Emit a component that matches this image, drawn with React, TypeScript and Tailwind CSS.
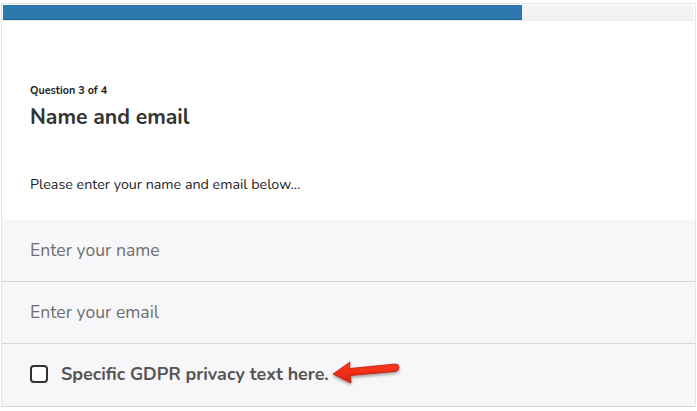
import React from "react";

function Arrow() {
  return (
    <svg width="72" height="28" viewBox="0 0 72 28" className="ml-[2px] -mt-[4px] overflow-visible">
      <defs>
        <filter id="sh" x="-20%" y="-40%" width="140%" height="200%">
          <feDropShadow dx="0" dy="2" stdDeviation="1.5" floodColor="#000" floodOpacity="0.35" />
        </filter>
        <linearGradient id="rg" x1="0" y1="0" x2="0" y2="1">
          <stop offset="0" stopColor="#ff3b22" />
          <stop offset="1" stopColor="#e0200c" />
        </linearGradient>
      </defs>
      <path
        d="M2 16 L19 4 L18.5 10.5 L64 6 Q68 5.8 68 9.5 Q68 13 64 13.5 L19.5 17.5 L20 25 Z"
        fill="url(#rg)"
        stroke="#b81a08"
        strokeWidth="0.8"
        strokeLinejoin="round"
        filter="url(#sh)"
      />
    </svg>
  );
}

export default function App() {
  return (
    <div className="w-[697px] h-[411px] bg-white overflow-hidden font-['Nunito','Lato','Open_Sans',sans-serif]">
      <div className="mx-[1px] mt-[3px] border-x border-t border-[#e6e6e6]">
        <div className="mx-[1px] mt-[1px] h-[16px] bg-[#f3f3f3] border-b border-[#ececec]">
          <div className="h-full w-[519px] bg-[#2c77ad] border-b border-[#23628f]" />
        </div>

        <div className="bg-white px-[28px] pt-[63px] pb-[25px]">
          <p className="text-[10.8px] font-bold text-[#222] leading-[14px]">Question 3 of 4</p>
          <h1 className="mt-[6px] text-[21.2px] font-bold text-[#333] leading-[26px]">Name and email</h1>
          <p className="mt-[45px] text-[14.3px] text-[#222] leading-[20px]">Please enter your name and email below...</p>
        </div>

        <div className="bg-[#f7f7f9]">
          <div className="h-[62px] flex items-center px-[28px] border-b border-[#d6d6d8]">
            <span className="text-[17.6px] text-[#6f6f6f]">Enter your name</span>
          </div>
          <div className="h-[62px] flex items-center px-[28px] border-b border-[#d6d6d8]">
            <span className="text-[17.6px] text-[#6f6f6f]">Enter your email</span>
          </div>
          <div className="h-[63px] flex items-center px-[28px] pb-[2px] border-b border-[#d6d6d8]">
            <span className="w-[18px] h-[18px] rounded-[4px] border-2 border-[#333] bg-white shrink-0" />
            <span className="ml-[13px] text-[17.9px] font-bold text-[#555]">Specific GDPR privacy text here.</span>
            <Arrow />
          </div>
        </div>
      </div>
    </div>
  );
}
